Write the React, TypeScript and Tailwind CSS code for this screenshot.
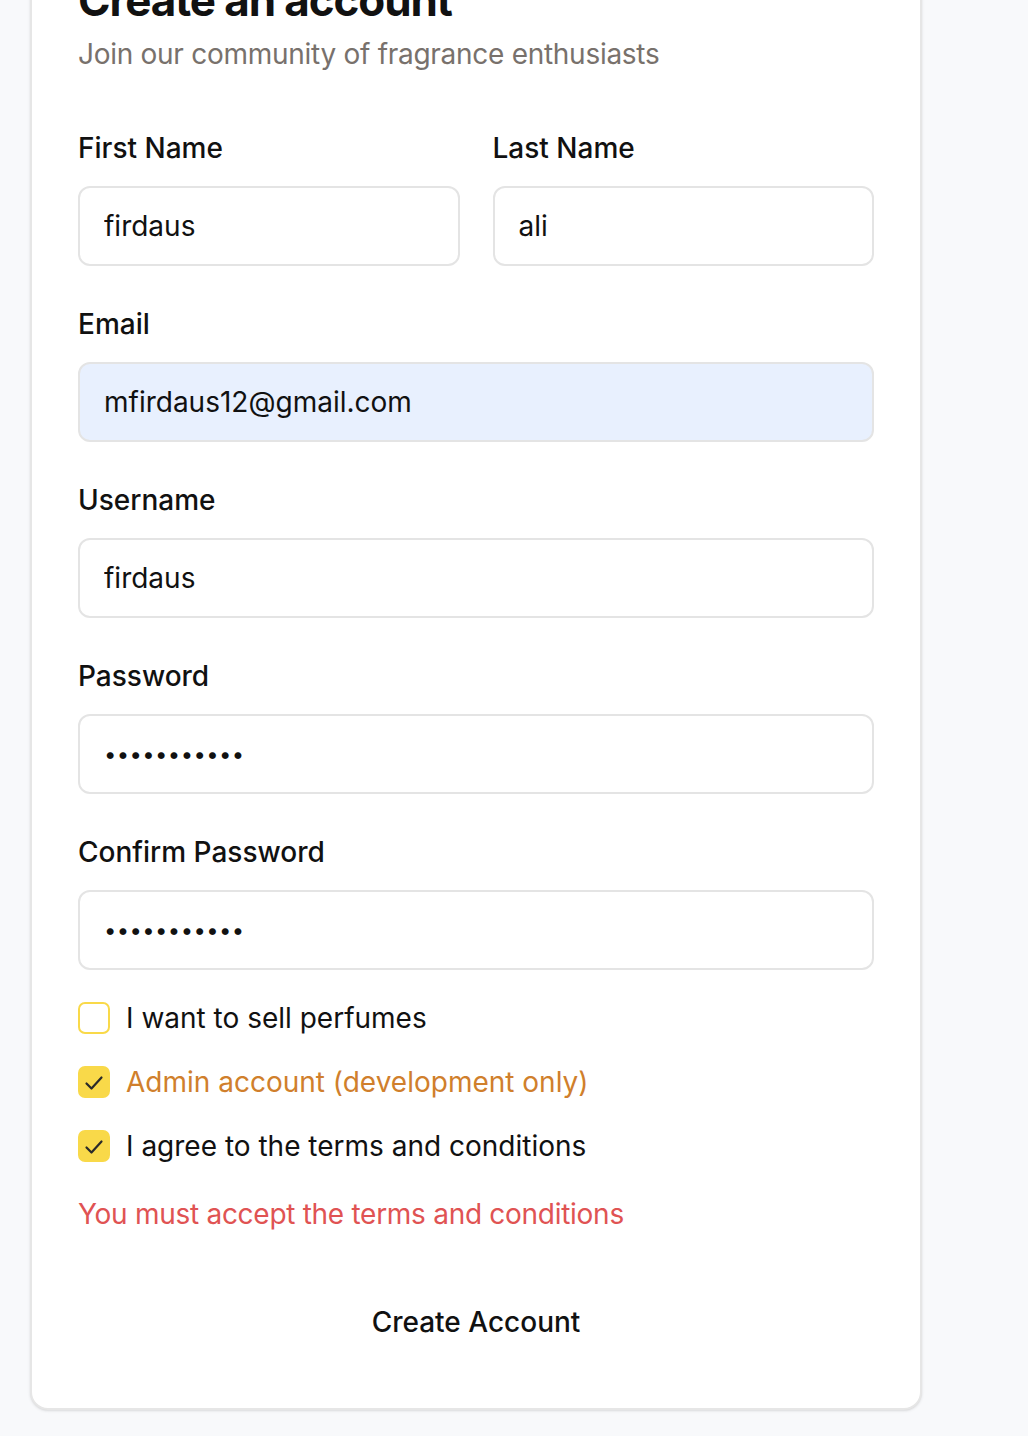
import { useState } from "react";

const font = { fontFamily: "Inter, 'Noto Sans', sans-serif" };

function Field({
  label,
  value,
  type = "text",
  autofill = false,
}: {
  label: string;
  value: string;
  type?: string;
  autofill?: boolean;
}) {
  const isPassword = type === "password";
  return (
    <div className="flex flex-col">
      <label className="text-[28px] leading-[40px] font-medium text-[#111111]">{label}</label>
      <input
        type={type}
        defaultValue={value}
        readOnly
        className={`mt-[18px] h-[80px] w-full rounded-[12px] border-2 border-[#e4e4e4] px-6 text-[#111111] outline-none ${
          autofill ? "bg-[#e8f0fe]" : "bg-white"
        } ${isPassword ? "text-[22px] tracking-[0.4px]" : "text-[28px]"}`}
      />
    </div>
  );
}

function Check({
  checked,
  onChange,
  label,
  className = "text-[#111111]",
}: {
  checked: boolean;
  onChange: () => void;
  label: string;
  className?: string;
}) {
  return (
    <label className="flex h-[40px] cursor-pointer items-center gap-4" onClick={onChange}>
      <span
        className={`flex h-[32px] w-[32px] items-center justify-center rounded-[7px] border-2 ${
          checked ? "border-[#f9d949] bg-[#f9d949]" : "border-[#f9d949] bg-white"
        }`}
      >
        {checked && (
          <svg width="24" height="24" viewBox="0 0 24 24" fill="none" stroke="#2a2a2a" strokeWidth="2.2" strokeLinecap="round" strokeLinejoin="round">
            <path d="M4.5 13.5l5 5L19.5 7.5" />
          </svg>
        )}
      </span>
      <span className={`text-[28px] leading-[40px] ${className}`}>{label}</span>
    </label>
  );
}

export default function App() {
  const [seller, setSeller] = useState(false);
  const [admin, setAdmin] = useState(true);
  const [terms, setTerms] = useState(true);

  return (
    <div className="min-h-[1436px] w-full overflow-hidden bg-[#f8f9fb]" style={font}>
      <div className="ml-[30px] mt-[-76px] w-[892px] rounded-[18px] border-2 border-[#e6e6e6] bg-white px-[46px] pb-[46px] pt-[46px] shadow-sm">
        <h1 className="text-[44px] font-bold leading-[56px] tracking-[-0.025em] text-[#111111]">Create an account</h1>
        <p className="mt-[6px] text-[28px] leading-[40px] tracking-[-0.01em] text-[#78716c]">
          Join our community of fragrance enthusiasts
        </p>

        <div className="mt-[54px] flex flex-col gap-[38px]">
          <div className="grid grid-cols-2 gap-[33px]">
            <Field label="First Name" value="firdaus" />
            <Field label="Last Name" value="ali" />
          </div>
          <Field label="Email" value="mfirdaus12@gmail.com" autofill />
          <Field label="Username" value="firdaus" />
          <Field label="Password" value="12345678901" type="password" />
          <Field label="Confirm Password" value="12345678901" type="password" />
        </div>

        <div className="mt-[28px] flex flex-col gap-[24px]">
          <Check checked={seller} onChange={() => setSeller(!seller)} label="I want to sell perfumes" />
          <Check
            checked={admin}
            onChange={() => setAdmin(!admin)}
            label="Admin account (development only)"
            className="text-[#d07f2c]"
          />
          <Check checked={terms} onChange={() => setTerms(!terms)} label="I agree to the terms and conditions" />
        </div>

        <p className="mt-[28px] text-[28px] leading-[40px] tracking-[-0.01em] text-[#e05353]">
          You must accept the terms and conditions
        </p>

        <button className="mt-[48px] h-[80px] w-full rounded-[12px] bg-white text-[28px] font-medium text-[#111111]">
          Create Account
        </button>
      </div>
    </div>
  );
}
